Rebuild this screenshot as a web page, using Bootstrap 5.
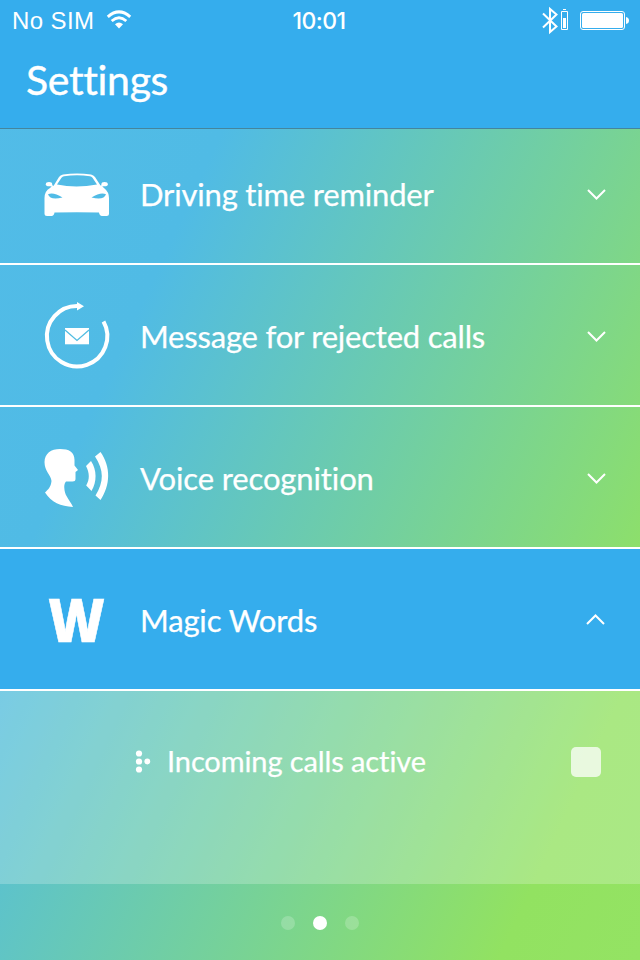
<!DOCTYPE html>
<html lang="en">
<head>
<meta charset="utf-8">
<meta name="viewport" content="width=device-width, initial-scale=1">
<title>Settings</title>
<link href="https://cdn.jsdelivr.net/npm/bootstrap@5.3.0/dist/css/bootstrap.min.css" rel="stylesheet">
<style>
body{font-family:Lato,"Open Sans",sans-serif;margin:0;color:#fff;font-variant-ligatures:none}
.phone{width:640px;height:960px;background:linear-gradient(115deg,#52bce8 0,#50bbe5 26%,#92e261 87%,#94e363 100%)}
.topbar{height:129px;background:#35aded;border-bottom:1px solid #44859d}
.status{height:40px;padding:0 11px 0 12px;font-family:Inter,"Liberation Sans",sans-serif;font-size:23px;line-height:40px}
.status .side{width:240px}
.carrier{font-family:"Liberation Sans",sans-serif;font-size:24px;letter-spacing:.4px;padding-top:2px}
.wifi{margin-left:12px}
.clock{font-weight:500;letter-spacing:-.6px;padding-top:1px;margin-right:3px}
.screen-title{font-size:41px;line-height:50px;padding:15px 0 0 26px;font-weight:400;letter-spacing:-.35px;-webkit-text-stroke:.4px #fff}
.setting{height:142px;border:0;border-bottom:2px solid #fff;padding:0 34px 0 44px;background:transparent;color:#fff;border-radius:0}
.setting.first{height:136px;padding-bottom:4px}
.setting.open{background:#35aded}
.pic{width:66px;height:72px;flex:none}
.label{font-size:31px;line-height:40px;margin-left:30px;white-space:nowrap;padding-top:1px;-webkit-text-stroke:.25px #fff}
.l1{letter-spacing:-.18px;padding-top:0}.l2{letter-spacing:-.2px}.l3{letter-spacing:-.12px}.l4{letter-spacing:-.16px}
.chev{margin-top:2px}
.first .chev{margin-top:0}
.magic-letter{font:800 60px "Open Sans",sans-serif}
.panel{height:193px;background:rgba(255,255,255,.22);padding:50px 39px 0 135px}
.sublabel{font-size:29px;line-height:40px;margin-left:16px;white-space:nowrap;letter-spacing:-.1px;-webkit-text-stroke:.25px #fff}
.check{width:30px;height:30px;border-radius:5px;background:rgba(255,255,255,.74);margin-top:6px}
.pager{height:76px;gap:18px;padding-top:2px}
.pager span{width:14px;height:14px;border-radius:50%;background:rgba(255,255,255,.2)}
.pager .on{background:#fff}
svg{display:block;overflow:visible}
</style>
</head>
<body>
<div class="phone d-flex flex-column overflow-hidden">
  <header class="topbar flex-shrink-0">
    <div class="status d-flex justify-content-between align-items-center">
      <div class="side d-flex align-items-center">
        <span class="carrier">No SIM</span>
        <svg class="wifi" width="26" height="20" viewBox="0 0 26 20" fill="none" stroke="#fff"><path d="M1.8 6.8Q13-3 24.2 6.8" stroke-width="3"/><path d="M5.7 11Q13 4.6 20.3 11" stroke-width="2.8"/><path d="M9 14.2Q13 10.6 17 14.2L13 18.5Z" fill="#fff" stroke="none"/></svg>
      </div>
      <span class="clock">10:01</span>
      <div class="side d-flex justify-content-end align-items-center">
        <svg width="88" height="28" viewBox="541 6 88 28" fill="none" stroke="#fff"><path d="M543 13.5L556.5 26.5L550 32V9L556.5 14.5L543 27.5" stroke-width="2"/><path d="M561.5 11.5H567.5V29.5H561.5Z"/><path d="M563 9.5H566"/><path d="M563 18H566V28H563Z" fill="#fff" stroke="none"/><rect x="580.5" y="11.5" width="44" height="18" rx="2.5"/><rect x="582" y="13" width="41" height="15" rx="1.5" fill="#fff" stroke="none"/><path d="M626 17Q629 17.5 629 20.5Q629 23.5 626 24Z" fill="#fff" stroke="none"/></svg>
      </div>
    </div>
    <h1 class="screen-title mb-0">Settings</h1>
  </header>
  <main class="list-group list-group-flush rounded-0 flex-shrink-0">
    <div class="setting first d-flex align-items-center">
      <svg class="pic" viewBox="44 158 66 72"><path fill="#fff" fill-rule="evenodd" d="M53.500 186L59 177Q60.200 175.200 63 174.600Q77 172.200 91 174.600Q93.500 175.200 95 177L100.500 185.500Q102.500 186 104 188Q109 192 109 198V213.500Q109 216 106.500 216H102Q99.500 216 99 212.600Q77 211.800 54.500 212.600Q54 216 51.500 216H47Q44.500 216 44.500 213.500V198Q44.500 191 50 188Q51 186.500 53.500 186ZM57 184.500Q76 188.700 97 184.500L92.500 177.700Q91.500 176.500 90 176.300Q77 174.300 64 176.300Q62.500 176.500 61.500 177.700ZM48 194.300Q53 191.500 62.500 197.500Q50 200.500 48 194.300ZM106 194.300Q101 191.500 91.500 197.500Q104 200.500 106 194.300Z"/><ellipse cx="49" cy="184.200" rx="3.200" ry="2.100" fill="#fff"/><ellipse cx="104.600" cy="184.200" rx="3.200" ry="2.100" fill="#fff"/><path d="M50 185L54 187M103.500 185L100 187" stroke="#fff" stroke-width="1.500"/></svg>
      <span class="label l1">Driving time reminder</span>
      <svg class="chev ms-auto" width="20" height="14" viewBox="0 0 20 14"><path d="M2 3L10.500 11.500L19 3" fill="none" stroke="#fff" stroke-width="2"/></svg>
    </div>
    <div class="setting d-flex align-items-center">
      <svg class="pic" viewBox="44 299 66 72"><path d="M78 306A30.200 30.200 0 1 0 103.500 321.500" fill="none" stroke="#fff" stroke-width="4"/><path fill="#fff" d="M77 302L84 306.300L77 310.500Z"/><path fill="#fff" d="M65 328H89V344.300H65Z"/><path d="M65 330L77 340.500L89 330" fill="none" stroke="#52bde2" stroke-width="1.300"/></svg>
      <span class="label l2">Message for rejected calls</span>
      <svg class="chev ms-auto" width="20" height="14" viewBox="0 0 20 14"><path d="M2 3L10.500 11.500L19 3" fill="none" stroke="#fff" stroke-width="2"/></svg>
    </div>
    <div class="setting d-flex align-items-center">
      <svg class="pic" viewBox="44 441 66 72"><path fill="#fff" d="M60 449C69 449 74.500 452 74.500 460V465.500L78 470L75.500 472V479Q75.500 481.500 72.500 481.500H66Q63.500 484 64.500 490C65.500 497 70 500 73 507C61 506.500 51 502 45 492.500C48 489.500 51 487 51.500 481C51 475 44.500 471 44.500 462C44.500 453.500 51 449 60 449Z"/><path fill="#fff" d="M91 461C97 470 97 482 91.500 491L86.200 485.500C90 479 89.500 473 86 466ZM100.500 452C111 467 110.500 485 100.500 500L95.500 495.500C104 482 104 470 95 456.500Z"/></svg>
      <span class="label l3">Voice recognition</span>
      <svg class="chev ms-auto" width="20" height="14" viewBox="0 0 20 14"><path d="M2 3L10.500 11.500L19 3" fill="none" stroke="#fff" stroke-width="2"/></svg>
    </div>
    <div class="setting open d-flex align-items-center">
      <svg class="pic" viewBox="44 583 66 72"><text class="magic-letter" x="48.200" y="642" textLength="56.500" lengthAdjust="spacingAndGlyphs" fill="#fff" stroke="#fff" stroke-width=".6">W</text></svg>
      <span class="label l4">Magic Words</span>
      <svg class="chev ms-auto" width="20" height="14" viewBox="0 0 20 14"><path d="M1 11L9.500 2.500L18 11" fill="none" stroke="#fff" stroke-width="2"/></svg>
    </div>
    <div class="panel d-flex align-items-start">
      <svg width="16" height="40" viewBox="0 0 16 40" fill="#fff"><circle cx="4" cy="12.500" r="3.100"/><circle cx="4" cy="20.500" r="3.100"/><circle cx="4" cy="28.500" r="3.100"/><circle cx="12.300" cy="20.500" r="2.900"/></svg>
      <span class="sublabel">Incoming calls active</span>
      <span class="check ms-auto"></span>
    </div>
  </main>
  <footer class="pager d-flex justify-content-center align-items-center">
    <span></span><span class="on"></span><span></span>
  </footer>
</div>
<script src="https://cdn.jsdelivr.net/npm/bootstrap@5.3.0/dist/js/bootstrap.bundle.min.js"></script>
</body>
</html>
